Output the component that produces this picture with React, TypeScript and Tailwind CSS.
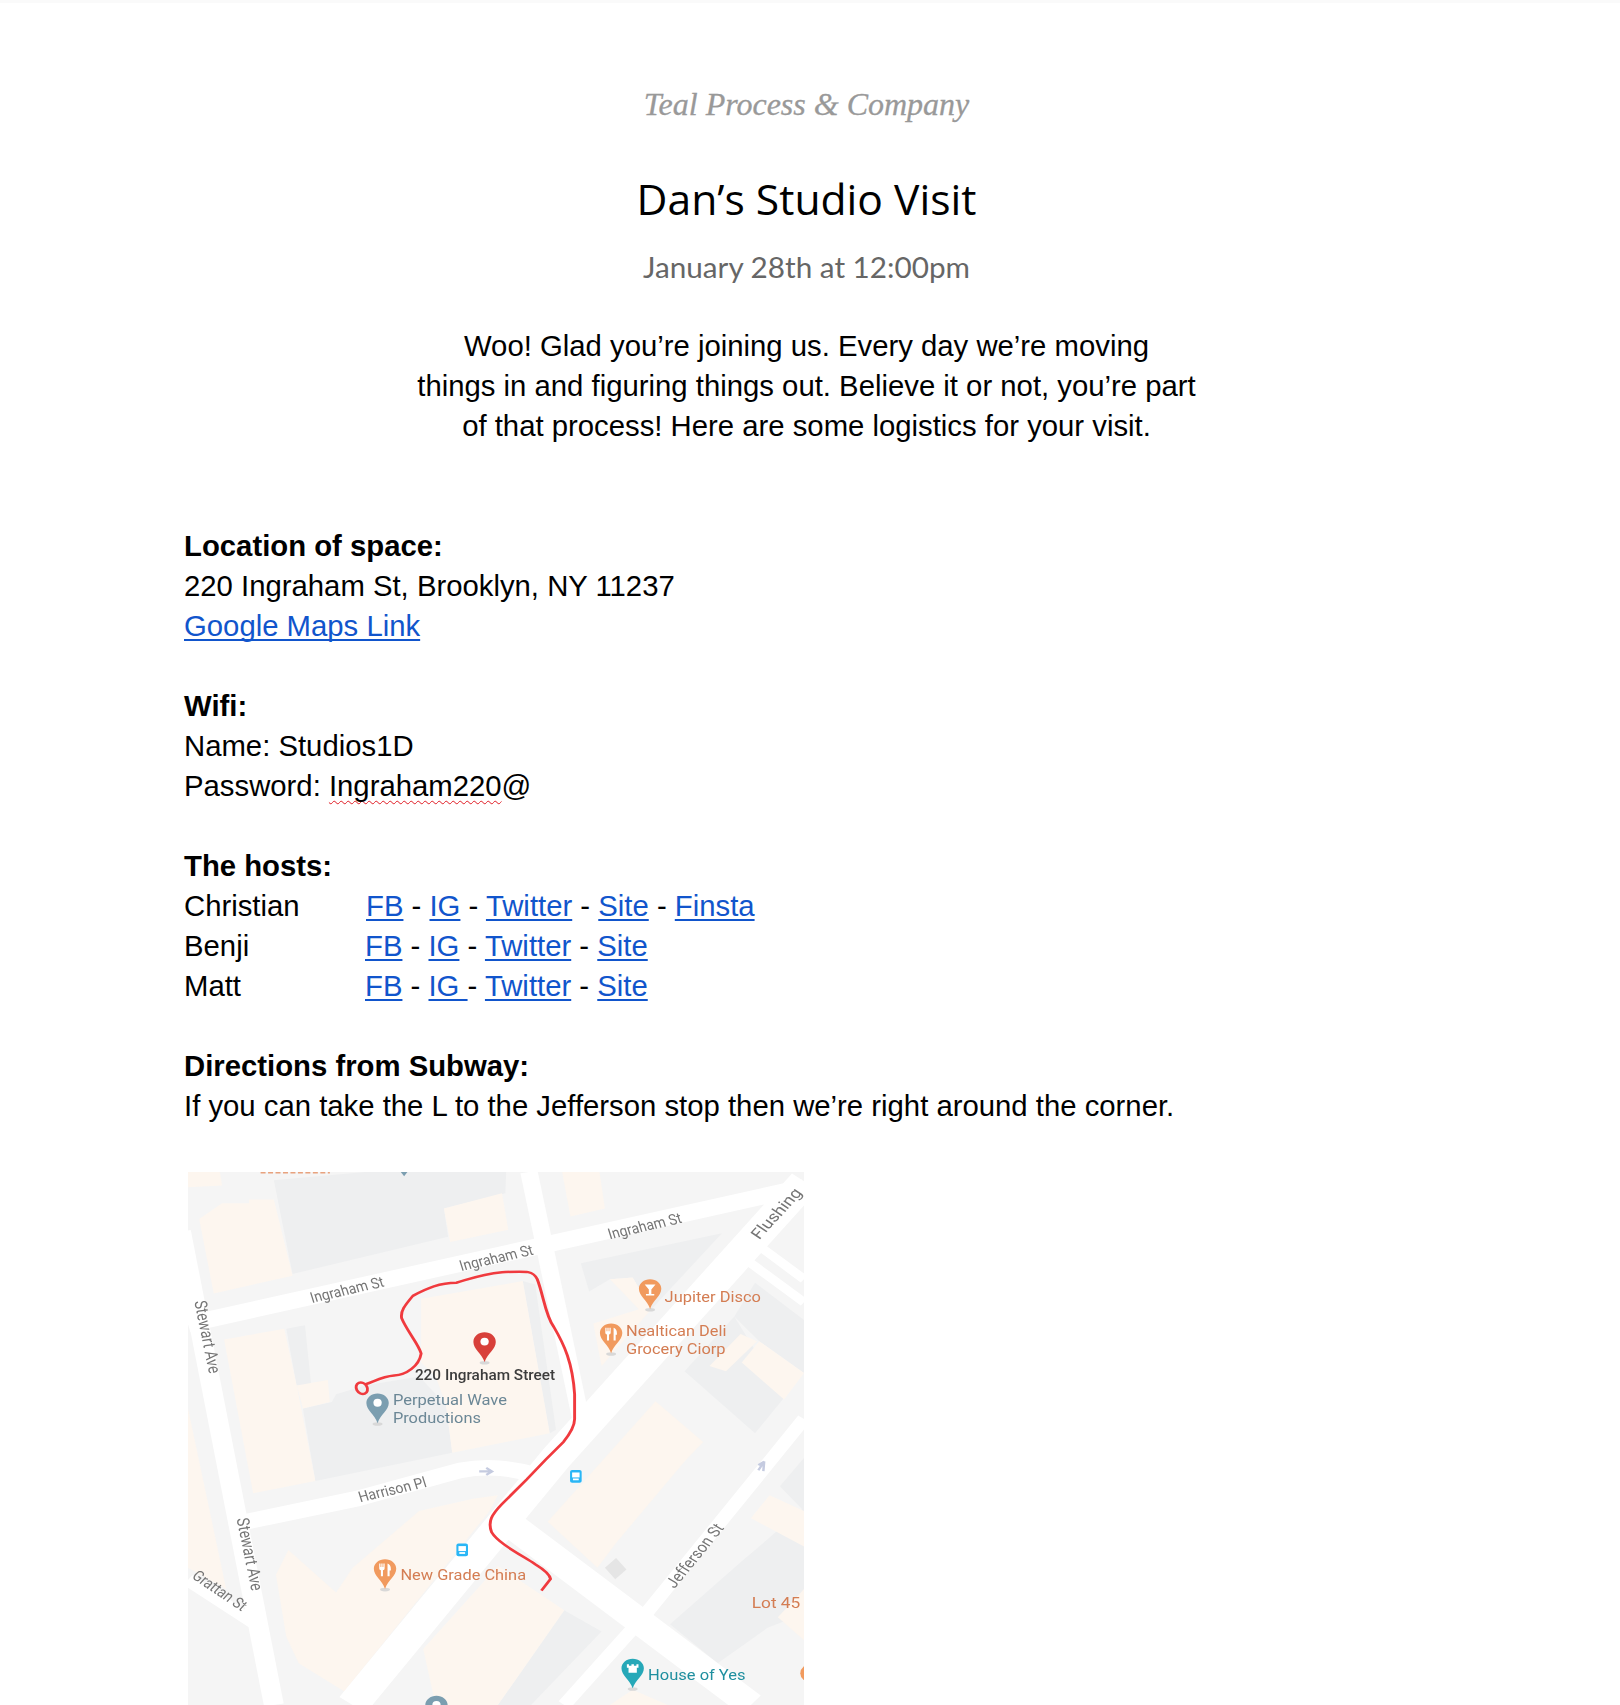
const Pin = ({ x, y, color, hole = false, children }: { x: number; y: number; color: string; hole?: boolean; children?: React.ReactNode }) => (
  <g transform={`translate(${x} ${y})`}>
    <ellipse cx="0" cy="58" rx="12" ry="5" fill="#d8d8d8" />
    <path d="M0 -28C-15 -28 -27 -16 -27 -1C-27 20 -7 30 0 56C7 30 27 20 27 -1C27 -16 15 -28 0 -28Z" fill={color} />
    {hole && <ellipse cx="0" cy="-2" rx="10" ry="11" fill="#fff" />}
    {children}
  </g>
);

const Fork = () => (
  <g fill="#fff">
    <path d="M-14 -16h3v10h2v-10h3v10h2v-10h3v14q0 4 -4 5v17h-5v-17q-4 -1 -4 -5Z" />
    <path d="M6 -16q8 3 8 16v4h-3v16h-5Z" />
  </g>
);

const Label = ({ x, y, w, size = 42, fill, rotate = 0, weight = 400, children }: { x: number; y: number; w: number; size?: number; fill?: string; rotate?: number; weight?: number; children: string }) => (
  <text
    x={x}
    y={y}
    fill={fill}
    fontSize={size}
    fontWeight={weight}
    textLength={w}
    lengthAdjust="spacingAndGlyphs"
    transform={rotate ? `rotate(${rotate} ${x} ${y})` : undefined}
  >
    {children}
  </text>
);

const cream = [
  '70,195 125,150 190,150 190,140 250,140 295,355 105,405',
  '660,165 800,122 815,225 675,260',
  '945,62 1035,62 1048,165 965,188',
  '130,535 275,505 305,665 350,935 200,970',
  '305,665 380,650 385,712 320,730',
  '605,420 850,370 915,800 680,855 665,720 640,640 605,600',
  '43,730 135,1240 43,1180',
  '43,62 120,62 125,100 43,105',
  '1060,365 1115,360 1160,450 1040,610 1020,490 1130,450',
  '910,1050 1170,710 1285,825 1240,880 1075,1110 1030,1180',
  '255,1200 285,1130 400,1250 440,1180 600,1020 730,985 790,975 770,1020 420,1530 310,1450 280,1375',
  '610,1410 790,1175 950,1300 790,1568 640,1568',
  '1378,600 1420,540 1528,630 1480,705',
  '1300,610 1375,520 1415,540 1340,625',
  '1445,975 1528,1020 1528,1120 1400,1040',
  '1060,1568 1115,1525 1200,1568',
  '1465,1320 1528,1240 1528,1385',
];

const grey = [
  '250,85 470,62 810,62 808,122 660,165 670,245 295,350',
  '320,730 390,712 400,690 470,665 600,640 665,720 680,855 350,935',
  '990,320 1330,235 1160,450 1115,360 1060,365 1010,400',
  '1240,625 1360,470 1480,700 1410,800',
  '1360,470 1410,375 1528,480 1528,630 1420,540',
  '1205,1340 1380,1160 1440,1100 1528,1010 1528,1310 1440,1350 1320,1450',
  '1470,950 1528,870 1528,1020',
  '950,1300 1040,1360 870,1568 790,1568',
  '280,505 325,495 340,665 305,665',
  '880,380 850,370 915,800 930,790',
];

// coordinates come from a crop that was not scaled evenly, hence preserveAspectRatio none
const MapPicture = () => (
  <svg
    viewBox="43 62 1485 1506"
    preserveAspectRatio="none"
    className="ml-[4px] block h-[533px] w-[616px] blur-[0.5px]"
    fontFamily="Roboto, sans-serif"
  >
    <rect x="43" y="62" width="1485" height="1506" fill="#f5f5f5" />
    {grey.map((p) => (
      <polygon key={p} points={p} fill="#eeeff0" />
    ))}
    {cream.map((p) => (
      <polygon key={p} points={p} fill="#fdf6ef" />
    ))}
    <polygon points="1048,1180 1075,1153 1100,1185 1073,1213" fill="#e5e5e5" />
    <g fill="none" stroke="#fff">
      <path d="M43 492L1528 105" strokeWidth="46" />
      <path d="M26 230L250 1568" strokeWidth="48" />
      <path d="M865 62L990 760" strokeWidth="42" />
      <path d="M1530 90L930 870L440 1568" strokeWidth="78" />
      <path d="M800 1040L1400 1568" strokeWidth="72" />
      <path d="M1528 760L1140 1320L950 1568" strokeWidth="34" />
      <path d="M185 1050L450 985L700 905Q790 885 885 920" strokeWidth="44" />
      <path d="M43 1215L200 1335" strokeWidth="34" />
      <path d="M1430 280L1528 365M1400 320L1528 430" strokeWidth="24" />
    </g>

    <path d="M1418 905l14 -25l-2 27M1418 890l14 -10" fill="none" stroke="#c5cbe0" strokeWidth="6" />
    <path d="M745 908h28M762 898l14 10l-14 10" fill="none" stroke="#c5cbe0" strokeWidth="6" />

    <g fill="#757575">
      <Label x={342} y={432} w={182} rotate={-15}>Ingraham St</Label>
      <Label x={702} y={342} w={182} rotate={-15}>Ingraham St</Label>
      <Label x={1060} y={252} w={182} rotate={-15}>Ingraham St</Label>
      <Label x={1420} y={255} w={170} rotate={-52}>Flushing</Label>
      <Label x={58} y={428} w={208} rotate={80}>Stewart Ave</Label>
      <Label x={160} y={1042} w={208} rotate={80}>Stewart Ave</Label>
      <Label x={458} y={995} w={168} rotate={-15}>Harrison Pl</Label>
      <Label x={50} y={1208} w={155} rotate={38}>Grattan St</Label>
      <Label x={1216} y={1240} w={210} rotate={-55}>Jefferson St</Label>
    </g>

    <path
      d="M895 1245L917 1212Q915 1195 880 1170C840 1140 790 1110 775 1080C765 1050 775 1030 800 1000L860 930L905 875L948 825C965 800 975 780 975 760L975 690C970 600 950 550 925 500C905 470 900 410 885 365C875 340 860 342 800 345C750 350 720 365 690 375C650 375 620 390 585 412C565 440 555 455 558 475C570 510 600 550 605 575C600 610 570 635 540 637C510 640 490 655 470 662"
      fill="none"
      stroke="#f03a3e"
      strokeWidth="7"
    />
    <ellipse cx="462" cy="673" rx="13" ry="17" fill="none" stroke="#f03a3e" strokeWidth="7" transform="rotate(-25 462 673)" />

    <Pin x={758} y={543} color="#d8403a" hole />
    <Label x={590} y={650} w={338} fill="#3c3c3c" weight={500}>220 Ingraham Street</Label>

    <Pin x={500} y={716} color="#7b9eb0" hole />
    <Label x={537} y={720} w={275} fill="#6b8796">Perpetual Wave</Label>
    <Label x={537} y={772} w={212} fill="#6b8796">Productions</Label>

    <Pin x={1157} y={393} color="#f19a5e">
      <path d="M-13 -13H13L3 1V14H10V18H-10V14H-3V1Z" fill="#fff" />
    </Pin>
    <Label x={1192} y={428} w={232} fill="#d47d53">Jupiter Disco</Label>

    <Pin x={1063} y={518} color="#f19a5e">
      <Fork />
    </Pin>
    <Label x={1099} y={524} w={242} fill="#d47d53">Nealtican Deli</Label>
    <Label x={1099} y={576} w={240} fill="#d47d53">Grocery Ciorp</Label>

    <Pin x={518} y={1184} color="#f19a5e">
      <Fork />
    </Pin>
    <Label x={555} y={1216} w={303} fill="#d47d53">New Grade China</Label>

    <Label x={1402} y={1295} w={190} fill="#d47d53">Lot 45 Bar</Label>

    <Pin x={1115} y={1465} color="#26a8b8">
      <path d="M-14 -12h5v4h6v-4h6v4h6v-4h5v10h-4v14h-20v-14h-4Z" fill="#fff" />
    </Pin>
    <Label x={1152} y={1496} w={235} fill="#1f8f9f">House of Yes</Label>

    <Pin x={642} y={1570} color="#7b9eb0" hole />
    <circle cx="1545" cy="1478" r="26" fill="#f19a5e" />
    <path d="M556 62l8 12l8 -12Z" fill="#7b9eb0" />
    <path d="M218 64H385" stroke="#e8a27e" strokeWidth="4" strokeDasharray="12 6" />

    <rect x="964" y="904" width="28" height="36" rx="5" fill="#29b6f6" />
    <rect x="969" y="911" width="18" height="14" fill="#fff" />
    <rect x="971" y="928" width="14" height="5" fill="#fff" />
    <rect x="690" y="1112" width="28" height="36" rx="5" fill="#29b6f6" />
    <rect x="695" y="1119" width="18" height="14" fill="#fff" />
    <rect x="697" y="1136" width="14" height="5" fill="#fff" />
  </svg>
);

const Link = ({ children }: { children: React.ReactNode }) => (
  <a href="#" className="text-[#1155cc] underline decoration-[2px] underline-offset-[3px] [text-decoration-skip-ink:none]">
    {children}
  </a>
);

const hosts = [
  { name: 'Christian', links: ['FB', 'IG', 'Twitter', 'Site', 'Finsta'], offset: 'ml-[1px]' },
  { name: 'Benji', links: ['FB', 'IG', 'Twitter', 'Site'], offset: '' },
  { name: 'Matt', links: ['FB', 'IG ', 'Twitter', 'Site'], offset: '' },
];

export default function App() {
  return (
    <div className="min-h-[1705px] overflow-hidden border-t-[3px] border-[#fafafa] bg-white pl-[184px] pr-[191px] font-['Liberation_Sans',sans-serif] text-[29.3px] leading-[40px] text-black">
      <div className="pt-[81px] text-center font-['Liberation_Serif',serif] text-[32px] leading-[40px] text-[#999999] italic [-webkit-text-stroke:0.3px_#999999]">
        Teal Process &amp; Company
      </div>
      <h1 className="mt-[46px] text-center font-['Open_Sans',sans-serif] text-[42.6px] leading-[56px] text-black">
        Dan’s Studio Visit
      </h1>
      <div className="mt-[21px] text-center font-['Lato',sans-serif] text-[29.7px] leading-[40px] text-[#666666]">
        January 28th at 12:00pm
      </div>
      <p className="mt-[39px] text-center">
        Woo! Glad you’re joining us. Every day we’re moving
        <br />
        things in and figuring things out. Believe it or not, you’re part
        <br />
        of that process! Here are some logistics for your visit.
      </p>

      <div className="mt-[80px]">
        <b>Location of space:</b>
        <div>220 Ingraham St, Brooklyn, NY 11237</div>
        <Link>Google Maps Link</Link>
      </div>

      <div className="mt-[40px]">
        <b>Wifi:</b>
        <div>Name: Studios1D</div>
        <div>
          Password: <span className="underline decoration-[#e01b24] decoration-wavy decoration-[1px] underline-offset-[4px] [text-decoration-skip-ink:none]">Ingraham220</span>@
        </div>
      </div>

      <div className="mt-[40px]">
        <b>The hosts:</b>
        {hosts.map((host) => (
          <div key={host.name} className="flex">
            <div className="w-[181px]">{host.name}</div>
            <div className={`whitespace-pre ${host.offset}`}>
              {host.links.map((link, i) => (
                <span key={link}>
                  {i > 0 && (host.links[i - 1].endsWith(' ') ? '- ' : ' - ')}
                  <Link>{link}</Link>
                </span>
              ))}
            </div>
          </div>
        ))}
      </div>

      <div className="mt-[40px]">
        <b>Directions from Subway:</b>
        <div>If you can take the L to the Jefferson stop then we’re right around the corner.</div>
      </div>

      <div className="mt-[46px] h-[533px] overflow-hidden">
        <MapPicture />
      </div>
    </div>
  );
}
